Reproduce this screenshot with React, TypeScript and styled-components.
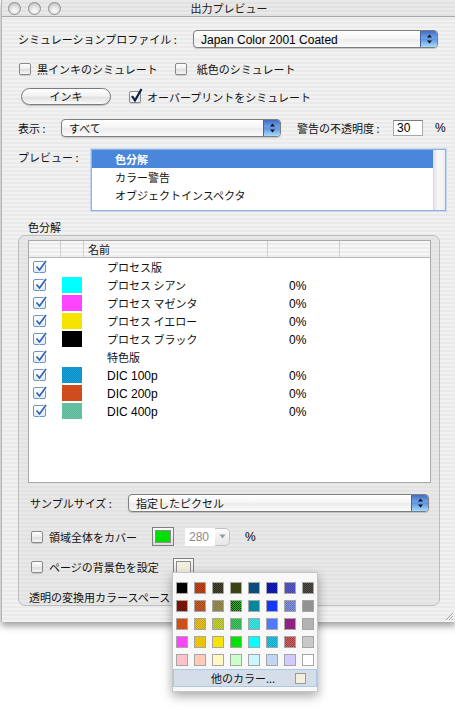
import React from "react";
import styled, { createGlobalStyle } from "styled-components";

const GlobalStyle = createGlobalStyle`
  html, body { margin: 0; padding: 0; background: #ffffff; }
  body {
    font-family: "Noto Sans CJK JP", "Liberation Sans", sans-serif;
    font-size: 11px;
    color: #111111;
  }
`;

const pinstripe = (a: string, b: string) =>
  `repeating-linear-gradient(to bottom, ${a} 0px, ${a} 2px, ${b} 2px, ${b} 4px)`;

const Page = styled.div`
  position: relative;
  width: 455px;
  height: 708px;
  overflow: hidden;
`;

const Window = styled.div`
  position: relative;
  box-sizing: border-box;
  width: 455px;
  height: 622px;
  margin-left: 1px;
  background: ${pinstripe("#f1f1f1", "#eaeaea")};
  border-left: 1px solid #b4b4b4;
  box-shadow: 0 4px 7px rgba(0, 0, 0, 0.38);
  display: flex;
  flex-direction: column;
`;

const TitleBar = styled.div`
  position: relative;
  box-sizing: border-box;
  height: 17px;
  flex: none;
  background: ${pinstripe("#e9e9e9", "#e1e1e1")};
  border-bottom: 1px solid #a9a9a9;
  display: flex;
  align-items: center;
  justify-content: center;
`;

const Lights = styled.div`
  position: absolute;
  left: 6px;
  top: 2px;
  display: flex;
  gap: 7px;
`;

const Light = styled.div`
  width: 11px;
  height: 11px;
  border-radius: 50%;
  border: 1px solid #8e8e8e;
  background: radial-gradient(circle at 50% 70%, #ffffff 0%, #e2e2e2 45%, #b6b6b6 100%);
`;

const Title = styled.span`
  font-size: 11px;
  line-height: 16px;
  color: #1a1a1a;
`;

const Content = styled.div`
  display: flex;
  flex-direction: column;
  padding: 13px 0 0 16px;
`;

const Row = styled.div<{ $h: number; $mt?: number; $ml?: number; $top?: boolean }>`
  display: flex;
  align-items: ${(p) => (p.$top ? "flex-start" : "center")};
  height: ${(p) => p.$h}px;
  margin-top: ${(p) => p.$mt ?? 0}px;
  margin-left: ${(p) => p.$ml ?? 0}px;
`;

const Label = styled.span<{ $w?: number; $ml?: number; $lh?: number }>`
  flex: none;
  white-space: nowrap;
  width: ${(p) => (p.$w ? `${p.$w}px` : "auto")};
  margin-left: ${(p) => p.$ml ?? 0}px;
  line-height: ${(p) => p.$lh ?? 14}px;
`;

const Latin = styled.span<{ $color?: string; $ml?: number }>`
  font-family: "Liberation Sans", "Noto Sans CJK JP", sans-serif;
  font-size: 12px;
  line-height: 14px;
  color: ${(p) => p.$color ?? "#000"};
  margin-left: ${(p) => p.$ml ?? 0}px;
  white-space: nowrap;
`;

/* ---- Aqua popup ---- */
const PopupBox = styled.div<{ $w: number }>`
  box-sizing: border-box;
  width: ${(p) => p.$w}px;
  height: 18px;
  flex: none;
  border: 1px solid #7e7e7e;
  border-radius: 4px;
  background: linear-gradient(#ffffff 0%, #f6f6f6 45%, #ececec 55%, #fbfbfb 100%);
  box-shadow: 0 1px 1px rgba(0, 0, 0, 0.18);
  display: flex;
  align-items: center;
  overflow: hidden;
`;

const PopupText = styled.span`
  flex: 1;
  padding-left: 7px;
  line-height: 16px;
  white-space: nowrap;
`;

const Stepper = styled.div`
  width: 16px;
  height: 100%;
  flex: none;
  border-left: 1px solid #45679f;
  background: linear-gradient(#3f6cc4 0%, #6f9ee6 40%, #5d95e2 52%, #a6dcff 100%);
  display: flex;
  align-items: center;
  justify-content: center;
`;

const Arrows = () => (
  <svg width="7" height="10" viewBox="0 0 7 10">
    <path d="M3.5 0.5 L6 3.5 L1 3.5 Z" fill="#111" />
    <path d="M3.5 9.5 L6 6.5 L1 6.5 Z" fill="#111" />
  </svg>
);

const Popup = ({ w, text, latin }: { w: number; text: string; latin?: boolean }) => (
  <PopupBox $w={w}>
    <PopupText>{latin ? <Latin>{text}</Latin> : text}</PopupText>
    <Stepper>
      <Arrows />
    </Stepper>
  </PopupBox>
);

/* ---- checkboxes ---- */
const CheckBox = styled.div<{ $ml?: number }>`
  box-sizing: border-box;
  position: relative;
  width: 12px;
  height: 12px;
  flex: none;
  margin-left: ${(p) => p.$ml ?? 0}px;
  border: 1px solid #8a8a8a;
  border-radius: 2px;
  background: linear-gradient(#ffffff, #ececec 50%, #dcdcdc 51%, #f7f7f7);
  box-shadow: 0 1px 1px rgba(0, 0, 0, 0.15);
`;

const CheckMark = styled.svg`
  position: absolute;
  left: 0px;
  top: -4px;
`;

const CheckGap = styled.span`
  width: 6px;
  flex: none;
`;

const Check = ({ label, checked, ml }: { label: string; checked?: boolean; ml?: number }) => (
  <>
    <CheckBox $ml={ml}>
      {checked && (
        <CheckMark width="13" height="15" viewBox="0 0 13 15">
          <path d="M2 8 L5 12.5 L11.5 1" stroke="#0d1f4a" strokeWidth="2.2" fill="none" />
        </CheckMark>
      )}
    </CheckBox>
    <CheckGap />
    <Label>{label}</Label>
  </>
);

const AquaButton = styled.div`
  box-sizing: border-box;
  width: 90px;
  height: 17px;
  margin-left: 3px;
  border: 1px solid #7a7a7a;
  border-radius: 9px;
  background: linear-gradient(#ffffff 0%, #f2f2f2 45%, #e2e2e2 55%, #f8f8f8 100%);
  box-shadow: 0 1px 1px rgba(0, 0, 0, 0.2);
  display: flex;
  align-items: center;
  justify-content: center;
  line-height: 15px;
  flex: none;
`;

const TextField = styled.div<{ $w: number }>`
  box-sizing: border-box;
  width: ${(p) => p.$w}px;
  height: 16px;
  flex: none;
  background: #fff;
  border: 1px solid #a8a8a8;
  border-top-color: #7c7c7c;
  padding-left: 3px;
  display: flex;
  align-items: center;
`;

/* ---- preview list ---- */
const ListBox = styled.div`
  box-sizing: border-box;
  width: 355px;
  height: 62px;
  flex: none;
  margin-left: 1px;
  border: 1px solid #8fb2df;
  box-shadow: 0 0 0 1px #c4d8f2;
  background: #ffffff;
  display: flex;
`;

const ListItems = styled.div`
  flex: 1;
  display: flex;
  flex-direction: column;
`;

const ListItem = styled.div<{ $sel?: boolean }>`
  height: 18px;
  line-height: 18px;
  padding-left: 23px;
  background: ${(p) => (p.$sel ? "#4a86d9" : "transparent")};
  color: ${(p) => (p.$sel ? "#fff" : "#111")};
  font-weight: ${(p) => (p.$sel ? 700 : 400)};
`;

const ScrollTrack = styled.div`
  width: 11px;
  flex: none;
  background: linear-gradient(to right, #e4e4e4, #f8f8f8 40%, #eeeeee);
  border-left: 1px solid #dcdcdc;
`;

/* ---- group box ---- */
const GroupLabel = styled.div`
  margin: 9px 0 0 10px;
  height: 14px;
  line-height: 14px;
`;

const GroupBox = styled.div`
  box-sizing: border-box;
  width: 422px;
  height: 371px;
  margin-top: 1px;
  border: 1px solid #bdbdbd;
  border-radius: 7px;
  background: ${pinstripe("#e8e8e8", "#e2e2e2")};
  padding: 4px 0 0 9px;
  display: flex;
  flex-direction: column;
`;

const Table = styled.div`
  box-sizing: border-box;
  width: 403px;
  height: 243px;
  border: 1px solid #a9a9a9;
  background: #ffffff;
  display: flex;
  flex-direction: column;
`;

const cols = "32px 23px 184px 72px 1fr";

const HeaderRow = styled.div`
  display: grid;
  grid-template-columns: ${cols};
  height: 16px;
  flex: none;
  border-bottom: 1px solid #b9b9b9;
  background: ${pinstripe("#f6f6f6", "#ececec")};
`;

const HeaderCell = styled.div`
  border-right: 1px solid #cfcfcf;
  padding-left: 4px;
  line-height: 16px;
  &:last-child { border-right: none; }
`;

const TableRow = styled.div`
  display: grid;
  grid-template-columns: ${cols};
  height: 18px;
  align-items: center;
`;

const CellCheck = styled.div`
  padding-left: 4px;
  display: flex;
  align-items: center;
`;

const BlueBox = styled.div`
  position: relative;
  box-sizing: border-box;
  width: 13px;
  height: 12px;
  border: 1px solid #6f95c6;
  border-radius: 2px;
  background: linear-gradient(#ffffff, #dfe9f6);
`;

const BlueTick = styled.svg`
  position: absolute;
  left: 0px;
  top: -3px;
`;

const Swatch = styled.div<{ $a: string; $b?: string }>`
  width: 20px;
  height: 16px;
  margin-left: 1px;
  background: ${(p) =>
    p.$b
      ? `repeating-conic-gradient(${p.$a} 0% 25%, ${p.$b} 0% 50%) 0 0 / 2px 2px`
      : p.$a};
`;

const NameCell = styled.div`
  padding-left: 23px;
  line-height: 14px;
  white-space: nowrap;
`;

const PctCell = styled.div`
  padding-left: 21px;
`;

const ColorWell = styled.div<{ $w: number; $h: number; $c: string; $ml: number }>`
  box-sizing: border-box;
  width: ${(p) => p.$w}px;
  height: ${(p) => p.$h}px;
  margin-left: ${(p) => p.$ml}px;
  flex: none;
  border: 1px solid #7f7f7f;
  padding: 2px;
  background: linear-gradient(#fafafa, #dedede);
  &::after {
    content: "";
    display: block;
    width: 100%;
    height: 100%;
    box-sizing: border-box;
    background: ${(p) => p.$c};
    border: 1px solid #8c8c8c;
  }
`;

const Combo = styled.div`
  display: flex;
  height: 18px;
  margin-left: 11px;
  flex: none;
`;

const ComboField = styled.div`
  width: 30px;
  background: #ffffff;
  display: flex;
  align-items: center;
  padding-left: 4px;
  box-sizing: border-box;
`;

const ComboArrow = styled.div`
  box-sizing: border-box;
  width: 15px;
  border: 1px solid #c4c4c4;
  border-left: none;
  border-radius: 0 5px 5px 0;
  background: linear-gradient(#fbfbfb, #e6e6e6);
  display: flex;
  align-items: center;
  justify-content: center;
`;

const Grip = styled.svg`
  position: absolute;
  right: 2px;
  bottom: 1px;
`;

/* ---- color palette menu ---- */
const Palette = styled.div`
  position: absolute;
  left: 172px;
  top: 572px;
  box-sizing: border-box;
  width: 146px;
  height: 120px;
  background: #f8f8f8;
  border: 1px solid #c6c6c6;
  box-shadow: 0 4px 10px rgba(0, 0, 0, 0.35);
  padding: 9px 0 0 3px;
  display: flex;
  flex-direction: column;
`;

const PaletteGrid = styled.div`
  display: grid;
  grid-template-columns: repeat(8, 12px);
  grid-auto-rows: 12px;
  gap: 6px;
`;

const Chip = styled.div<{ $a: string; $b?: string }>`
  box-sizing: border-box;
  border: 1px solid #a6a6a6;
  background: ${(p) =>
    p.$b
      ? `repeating-conic-gradient(${p.$a} 0% 25%, ${p.$b} 0% 50%) 0 0 / 2px 2px`
      : p.$a};
`;

const MoreColors = styled.div`
  box-sizing: border-box;
  width: 144px;
  height: 18px;
  margin: 3px 0 0 -3px;
  border: 1px solid #a9c9ea;
  background: #d5dee8;
  display: flex;
  align-items: center;
  padding-left: 37px;
`;

const MoreText = styled.span`
  flex: 1;
  line-height: 14px;
`;

const MoreChip = styled.div`
  box-sizing: border-box;
  width: 11px;
  height: 11px;
  margin-right: 10px;
  border: 1px solid #9a9a9a;
  background: #f3efdf;
`;

const palette: [string, string?][] = [
  ["#000000"], ["#c9491a", "#9c2e0c"], ["#4c4c34", "#2c2c1c"], ["#3c4212"], ["#0b4d78"], ["#1424b8", "#0810a0"], ["#5a5cc8", "#4444ac"], ["#52524a", "#34342c"],
  ["#941a02", "#5c0c00"], ["#c8622a", "#a0461c"], ["#a48a52", "#7c7c44"], ["#22c422", "#063a06"], ["#028a9c"], ["#1438ff"], ["#6272c4", "#8a92d4"], ["#929292"],
  ["#d24e16"], ["#eac222", "#c8a212"], ["#cad432", "#a2b22a"], ["#42ca4a", "#2ea262"], ["#22d2ca", "#44e2e2"], ["#527aff"], ["#922282"], ["#b2b2b2"],
  ["#ff44ff"], ["#f2d202", "#e0b802"], ["#f8e402"], ["#02e202"], ["#02ffff"], ["#22cae8", "#10a2c2"], ["#ca6262", "#a24242"], ["#c9c9c9"],
  ["#ffc2ca"], ["#ffcaba"], ["#fff8c2"], ["#caffca"], ["#caf8ff"], ["#bad2f2", "#cadaf8"], ["#d2caff"], ["#ffffff"],
];

const rows: { name: string; a?: string; b?: string; pct?: boolean }[] = [
  { name: "プロセス版" },
  { name: "プロセス シアン", a: "#00ffff", pct: true },
  { name: "プロセス マゼンタ", a: "#ff44ff", pct: true },
  { name: "プロセス イエロー", a: "#f5e400", pct: true },
  { name: "プロセス ブラック", a: "#000000", pct: true },
  { name: "特色版" },
  { name: "DIC 100p", a: "#1aa2d8", b: "#0a8cc4", pct: true },
  { name: "DIC 200p", a: "#d04c1c", pct: true },
  { name: "DIC 400p", a: "#5fba9a", b: "#6cc2a4", pct: true },
];

export default function App() {
  return (
    <Page>
      <GlobalStyle />
      <Window>
        <TitleBar>
          <Lights>
            <Light />
            <Light />
            <Light />
          </Lights>
          <Title>出力プレビュー</Title>
        </TitleBar>
        <Content>
          <Row $h={18}>
            <Label $w={175}>シミュレーションプロファイル :</Label>
            <Popup w={245} text="Japan Color 2001 Coated" latin />
          </Row>
          <Row $h={14} $mt={14} $ml={1}>
            <Check label="黒インキのシミュレート" />
            <CheckBox $ml={17} />
            <CheckGap />
            <Label $ml={4}>紙色のシミュレート</Label>
          </Row>
          <Row $h={17} $mt={12}>
            <AquaButton>インキ</AquaButton>
            <CheckBox $ml={18}>
              <CheckMark width="13" height="15" viewBox="0 0 13 15">
                <path d="M2 8 L5 12.5 L11.5 1" stroke="#0d1f4a" strokeWidth="2.2" fill="none" />
              </CheckMark>
            </CheckBox>
            <CheckGap />
            <Label>オーバープリントをシミュレート</Label>
          </Row>
          <Row $h={18} $mt={14}>
            <Label $w={43}>表示 :</Label>
            <Popup w={220} text="すべて" />
            <Label $w={96} $ml={16}>警告の不透明度 :</Label>
            <TextField $w={30}>
              <Latin>30</Latin>
            </TextField>
            <Latin $ml={12}>%</Latin>
          </Row>
          <Row $h={62} $mt={12} $top>
            <Label $w={72} $lh={16}>プレビュー :</Label>
            <ListBox>
              <ListItems>
                <ListItem $sel>色分解</ListItem>
                <ListItem>カラー警告</ListItem>
                <ListItem>オブジェクトインスペクタ</ListItem>
              </ListItems>
              <ScrollTrack />
            </ListBox>
          </Row>
          <GroupLabel>色分解</GroupLabel>
          <GroupBox>
            <Table>
              <HeaderRow>
                <HeaderCell />
                <HeaderCell />
                <HeaderCell>名前</HeaderCell>
                <HeaderCell />
                <HeaderCell />
              </HeaderRow>
              {rows.map((r) => (
                <TableRow key={r.name}>
                  <CellCheck>
                    <BlueBox>
                      <BlueTick width="14" height="14" viewBox="0 0 14 14">
                        <path d="M2.5 7.5 L5.5 11 L12 2" stroke="#ffffff" strokeWidth="3.4" fill="none" />
                        <path d="M2.5 7.5 L5.5 11 L12 2" stroke="#2f68b8" strokeWidth="1.8" fill="none" />
                      </BlueTick>
                    </BlueBox>
                  </CellCheck>
                  <div>{r.a && <Swatch $a={r.a} $b={r.b} />}</div>
                  <NameCell>
                    {r.name.startsWith("DIC") ? <Latin>{r.name}</Latin> : r.name}
                  </NameCell>
                  <PctCell>{r.pct && <Latin>0%</Latin>}</PctCell>
                  <div />
                </TableRow>
              ))}
            </Table>
            <Row $h={18} $mt={11} $ml={2}>
              <Label $w={98}>サンプルサイズ :</Label>
              <Popup w={301} text="指定したピクセル" />
            </Row>
            <Row $h={19} $mt={15} $ml={3}>
              <Check label="領域全体をカバー" />
              <ColorWell $w={22} $h={19} $c="#00e000" $ml={15} />
              <Combo>
                <ComboField>
                  <Latin $color="#8a8a8a">280</Latin>
                </ComboField>
                <ComboArrow>
                  <svg width="7" height="5" viewBox="0 0 7 5">
                    <path d="M0.5 0.5 L6.5 0.5 L3.5 4.5 Z" fill="#9a9a9a" />
                  </svg>
                </ComboArrow>
              </Combo>
              <Latin $ml={15}>%</Latin>
            </Row>
            <Row $h={18} $mt={12} $ml={3}>
              <Check label="ページの背景色を設定" />
              <ColorWell $w={21} $h={18} $c="#f3efdf" $ml={14} />
            </Row>
            <Row $h={14} $mt={14} $ml={1}>
              <Label>透明の変換用カラースペース</Label>
            </Row>
          </GroupBox>
        </Content>
        <Grip width="10" height="10" viewBox="0 0 10 10">
          <path d="M9 2 L2 9 M9 5 L5 9 M9 8 L8 9" stroke="#9c9c9c" strokeWidth="1" />
          <path d="M9.5 3 L3 9.5 M9.5 6 L6 9.5" stroke="#ffffff" strokeWidth="1" />
        </Grip>
      </Window>
      <Palette>
        <PaletteGrid>
          {palette.map(([a, b], i) => (
            <Chip key={i} $a={a} $b={b} />
          ))}
        </PaletteGrid>
        <MoreColors>
          <MoreText>他のカラー...</MoreText>
          <MoreChip />
        </MoreColors>
      </Palette>
    </Page>
  );
}
